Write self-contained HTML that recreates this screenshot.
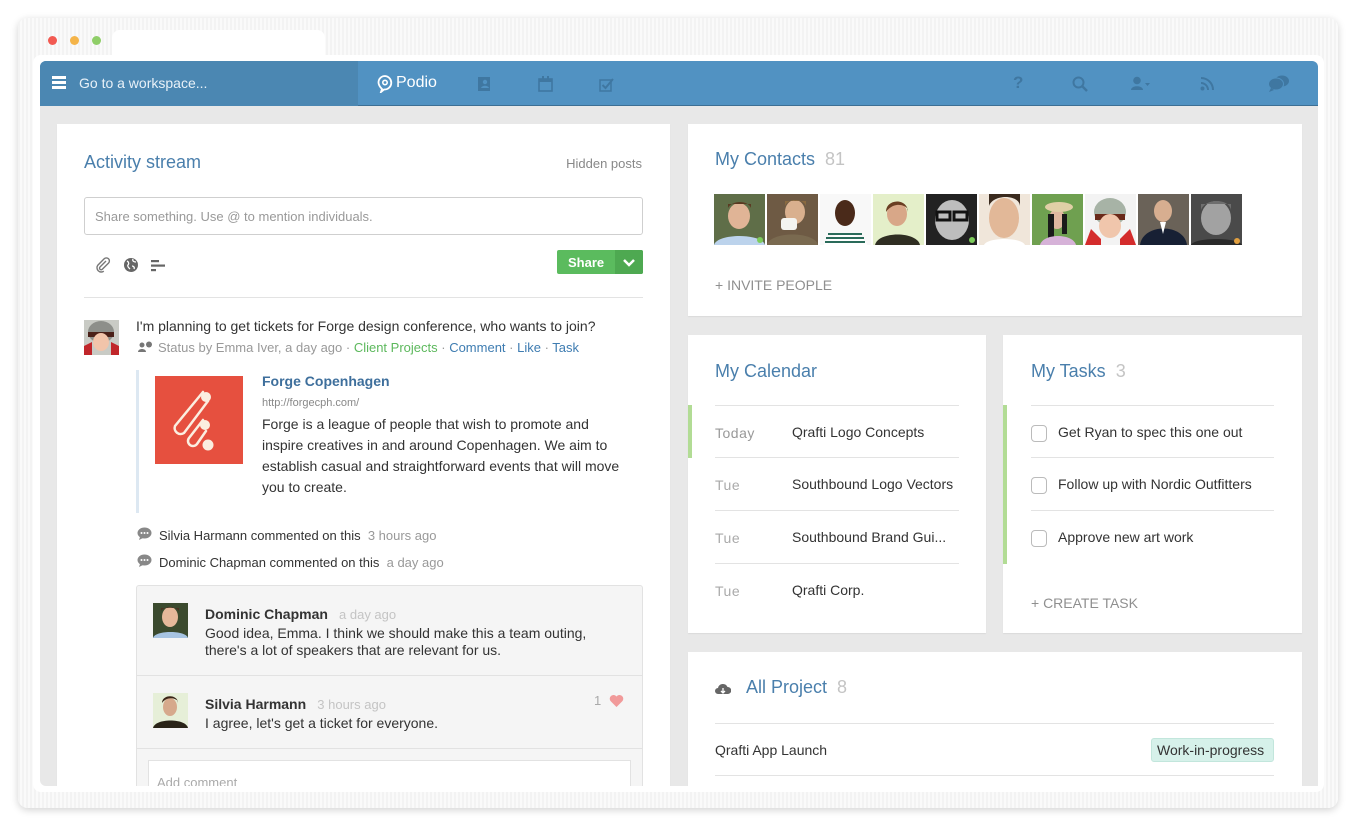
<!DOCTYPE html>
<html><head><meta charset="utf-8">
<style>
*{box-sizing:border-box;margin:0;padding:0}
body{width:1357px;height:827px;background:#fff;font-family:"Liberation Sans",Arial,sans-serif;position:relative;overflow:hidden;color:#333}
.abs{position:absolute}
.frame{left:18px;top:18px;width:1320px;height:790px;border-radius:10px;background:repeating-linear-gradient(90deg,#f3f3f3 0 2px,#fafafa 2px 4px);box-shadow:0 2px 8px rgba(0,0,0,.18)}
.inner{left:33px;top:55px;width:1291px;height:737px;background:#fff;border-radius:8px}
.tab{left:112px;top:30px;width:213px;height:30px;background:#fff;border-radius:8px 8px 0 0}
.dot{width:9px;height:9px;border-radius:50%;top:36px}
.app{left:40px;top:61px;width:1278px;height:725px;background:#e8e8e8;overflow:hidden;border-radius:6px 6px 0 6px}
.hdr{left:0;top:0;width:1278px;height:45px;background:#5192c2;border-bottom:1px solid #3d6f94}
.hdrl{left:0;top:0;width:318px;height:45px;background:#4b87b2}
.card{background:#fff;box-shadow:0 1px 1px rgba(0,0,0,.06)}
.h{font-size:18px;color:#4a7fac}
.n{color:#c4c4c4}
.sm{font-size:13px}
.line{height:1px;background:#e3e3e3}
.gray{color:#8a8a8a}
</style></head><body>
<div class="abs frame"></div>
<div class="abs tab"></div>
<div class="abs dot" style="left:48px;background:#f25a52"></div>
<div class="abs dot" style="left:70px;background:#f4b449"></div>
<div class="abs dot" style="left:92px;background:#8fce68"></div>
<div class="abs inner"></div>

<div class="abs app">
 <div class="abs hdr"></div>
 <div class="abs hdrl"></div>
 <div class="abs" style="left:12px;top:15px;width:14px;height:3px;background:#fff;box-shadow:0 5px 0 #fff,0 10px 0 #fff"></div>
 <div class="abs" style="left:39px;top:14px;font-size:14px;color:#e8f1f8">Go to a workspace...</div>
 <svg class="abs" style="left:337px;top:14px" width="16" height="18" viewBox="0 0 16 18"><path d="M8 1a6.5 6.5 0 0 0-6.5 6.5c0 3 2 5 3.5 6.5L4 17l3-2.5A6.5 6.5 0 1 0 8 1z" fill="none" stroke="#fff" stroke-width="1.8"/><circle cx="8" cy="7.5" r="2.2" fill="none" stroke="#fff" stroke-width="1.6"/></svg>
 <div class="abs" style="left:356px;top:13px;font-size:16px;color:#fff">Podio</div>
 <svg class="abs" style="left:437px;top:15px" width="14" height="16"><rect x="1" y="1" width="12" height="14" fill="#3f77a1"/><circle cx="8" cy="6" r="2.2" fill="#5192c2"/><path d="M4 12c1-3 7-3 8 0z" fill="#5192c2"/></svg>
 <svg class="abs" style="left:498px;top:15px" width="15" height="16"><rect x="1" y="3" width="13" height="12" fill="none" stroke="#3f77a1" stroke-width="1.6"/><rect x="1" y="3" width="13" height="3" fill="#3f77a1"/><rect x="4" y="0" width="2" height="4" fill="#3f77a1"/><rect x="9" y="0" width="2" height="4" fill="#3f77a1"/></svg>
 <svg class="abs" style="left:559px;top:16px" width="16" height="15"><rect x="1" y="3" width="11" height="11" fill="none" stroke="#3f77a1" stroke-width="1.5"/><path d="M3.5 8l3 3L14 2" fill="none" stroke="#3f77a1" stroke-width="2"/></svg>
 <div class="abs" style="left:973px;top:12px;font-size:17px;font-weight:bold;color:#3f77a1">?</div>
 <svg class="abs" style="left:1032px;top:15px" width="16" height="16"><circle cx="6.5" cy="6.5" r="5" fill="none" stroke="#3f77a1" stroke-width="2"/><path d="M10 10l5 5" stroke="#3f77a1" stroke-width="2.5"/></svg>
 <svg class="abs" style="left:1090px;top:15px" width="22" height="15"><circle cx="7" cy="4.5" r="3.8" fill="#3f77a1"/><path d="M1 14c0-5 12-5 12 0z" fill="#3f77a1"/><path d="M15 7h5l-2.5 3z" fill="#3f77a1"/></svg>
 <svg class="abs" style="left:1160px;top:15px" width="14" height="15"><circle cx="2.5" cy="12.5" r="2" fill="#3f77a1"/><path d="M1 7a7 7 0 0 1 7 7M1 2a12 12 0 0 1 12 12" fill="none" stroke="#3f77a1" stroke-width="2"/></svg>
 <svg class="abs" style="left:1228px;top:14px" width="22" height="17"><ellipse cx="14" cy="6" rx="7" ry="5.5" fill="#3f77a1"/><ellipse cx="8" cy="9" rx="7.5" ry="6" fill="#3f77a1" stroke="#5192c2" stroke-width="1"/><path d="M3 13l-2 4 5-2z" fill="#3f77a1"/></svg>

 <div class="abs card" style="left:17px;top:63px;width:613px;height:680px">
  <div class="abs h" style="left:27px;top:28px">Activity stream</div>
  <div class="abs sm gray" style="right:28px;top:32px;color:#888">Hidden posts</div>
  <div class="abs" style="left:27px;top:73px;width:559px;height:38px;border:1px solid #cfcfcf;border-radius:3px"></div>
  <div class="abs sm" style="left:38px;top:85px;color:#999">Share something. Use @ to mention individuals.</div>
  <svg class="abs" style="left:38px;top:133px" width="16" height="16"><path d="M11 4l-6 6a1.6 1.6 0 0 0 2.3 2.3l6.2-6.2a3 3 0 0 0-4.3-4.3L2.8 8.2a4.3 4.3 0 0 0 6 6" fill="none" stroke="#777" stroke-width="1.4"/></svg>
  <svg class="abs" style="left:66px;top:133px" width="16" height="16"><circle cx="8" cy="8" r="7" fill="#666"/><path d="M4 4c2 1 2 3 1 4s1 3 2 4M10 2c-1 2 1 3 3 3M9 9c1 0 3 1 2 3" fill="none" stroke="#fff" stroke-width="1.3"/></svg>
  <svg class="abs" style="left:94px;top:135px" width="16" height="14"><rect x="0" y="1" width="8" height="2.2" fill="#666"/><rect x="0" y="5.5" width="14" height="2.2" fill="#666"/><rect x="0" y="10" width="5" height="2.2" fill="#666"/></svg>
  <div class="abs" style="left:500px;top:126px;width:86px;height:24px;background:#5bbb5e;border-radius:2px"></div>
  <div class="abs" style="left:558px;top:126px;width:28px;height:24px;background:#4ea951;border-radius:0 2px 2px 0"></div>
  <div class="abs" style="left:511px;top:131px;font-size:13px;font-weight:bold;color:#fff">Share</div>
  <svg class="abs" style="left:565px;top:134px" width="14" height="10"><path d="M2 2l5 5 5-5" fill="none" stroke="#fff" stroke-width="2.5"/></svg>
  <div class="abs line" style="left:27px;top:173px;width:559px"></div>

  <svg class="abs" style="left:27px;top:196px" width="35" height="35"><rect width="35" height="35" fill="#c9cbc5"/><ellipse cx="17" cy="12" rx="13" ry="11" fill="#8d8f8a"/><rect x="4" y="12" width="26" height="5" fill="#4a2018"/><ellipse cx="17" cy="22" rx="8" ry="9" fill="#f2c4aa"/><path d="M0 26l8-4v13H0zM35 26l-8-4v13h8z" fill="#c0262a"/></svg>
  <div class="abs" style="left:79px;top:194px;font-size:14px;color:#333">I'm planning to get tickets for Forge design conference, who wants to join?</div>
  <svg class="abs" style="left:80px;top:217px" width="16" height="12"><circle cx="5" cy="4" r="2.5" fill="#777"/><path d="M1 11c0-4 8-4 8 0z" fill="#777"/><circle cx="12" cy="3.5" r="3" fill="#777"/></svg>
  <div class="abs sm" style="left:101px;top:216px;color:#999">Status by Emma Iver, a day ago · <span style="color:#5cb85c">Client Projects</span> · <span style="color:#3e7cb1">Comment</span> · <span style="color:#3e7cb1">Like</span> · <span style="color:#3e7cb1">Task</span></div>
  <div class="abs" style="left:79px;top:246px;width:3px;height:143px;background:#dde8f2"></div>
  <svg class="abs" style="left:98px;top:252px" width="88" height="88"><rect width="88" height="88" fill="#e6503f"/><g fill="none" stroke="#fbeee0" stroke-width="2.5" stroke-linecap="round"><path d="M48 16L20 50a6 6 0 0 0 9 7L53 25"/><path d="M48 44L34 62a5 5 0 0 0 8 6L51 55"/></g><circle cx="51" cy="21" r="5" fill="#fbeee0"/><circle cx="50" cy="49" r="5" fill="#fbeee0"/><circle cx="53" cy="69" r="5.5" fill="#fbeee0"/></svg>
  <div class="abs" style="left:205px;top:249px;font-size:14px;font-weight:bold;color:#3e6f9c">Forge Copenhagen</div>
  <div class="abs" style="left:205px;top:273px;font-size:11px;color:#888">http://forgecph.com/</div>
  <div class="abs" style="left:205px;top:290px;width:366px;font-size:14px;line-height:21px;color:#333">Forge is a league of people that wish to promote and inspire creatives in and around Copenhagen. We aim to establish casual and straightforward events that will move you to create.</div>
  <svg class="abs" style="left:80px;top:403px" width="15" height="13"><ellipse cx="7.5" cy="6" rx="7" ry="5.5" fill="#888"/><path d="M3 10l-1 3 4-2z" fill="#888"/><circle cx="4.5" cy="6" r="1" fill="#fff"/><circle cx="7.5" cy="6" r="1" fill="#fff"/><circle cx="10.5" cy="6" r="1" fill="#fff"/></svg>
  <div class="abs sm" style="left:102px;top:404px">Silvia Harmann commented on this <span style="color:#999">&nbsp;3 hours ago</span></div>
  <svg class="abs" style="left:80px;top:430px" width="15" height="13"><ellipse cx="7.5" cy="6" rx="7" ry="5.5" fill="#888"/><path d="M3 10l-1 3 4-2z" fill="#888"/><circle cx="4.5" cy="6" r="1" fill="#fff"/><circle cx="7.5" cy="6" r="1" fill="#fff"/><circle cx="10.5" cy="6" r="1" fill="#fff"/></svg>
  <div class="abs sm" style="left:102px;top:431px">Dominic Chapman commented on this <span style="color:#999">&nbsp;a day ago</span></div>
  <div class="abs" style="left:79px;top:461px;width:507px;height:240px;background:#f5f5f5;border:1px solid #e2e2e2;border-radius:3px"></div>
  <div class="abs line" style="left:80px;top:551px;width:505px;background:#e2e2e2"></div>
  <div class="abs line" style="left:80px;top:624px;width:505px;background:#e2e2e2"></div>
  <svg class="abs" style="left:96px;top:479px" width="35" height="35"><rect width="35" height="35" fill="#3b4a2e"/><ellipse cx="17" cy="14" rx="8" ry="10" fill="#e6b89a"/><path d="M8 8c3-5 15-5 18 0v-3H8z" fill="#4a3020"/><path d="M0 35c2-8 33-8 35 0z" fill="#a7c4e2"/></svg>
  <div class="abs" style="left:148px;top:482px;font-size:14px;font-weight:bold;color:#333">Dominic Chapman <span style="font-weight:normal;color:#c4c4c4;font-size:13px">&nbsp;&nbsp;a day ago</span></div>
  <div class="abs" style="left:148px;top:501px;font-size:14px;line-height:17px;color:#333">Good idea, Emma. I think we should make this a team outing,<br>there's a lot of speakers that are relevant for us.</div>
  <svg class="abs" style="left:96px;top:569px" width="35" height="35"><rect width="35" height="35" fill="#e6efd8"/><ellipse cx="17" cy="14" rx="7" ry="9" fill="#d6a98c"/><path d="M9 10c0-9 16-9 16 0v-2c-4-4-12-4-16 2z" fill="#3a2416"/><path d="M0 35c2-10 33-10 35 0z" fill="#2a2418"/></svg>
  <div class="abs" style="left:148px;top:572px;font-size:14px;font-weight:bold;color:#333">Silvia Harmann <span style="font-weight:normal;color:#c4c4c4;font-size:13px">&nbsp;&nbsp;3 hours ago</span></div>
  <div class="abs" style="left:148px;top:591px;font-size:14px;color:#333">I agree, let's get a ticket for everyone.</div>
  <div class="abs" style="left:537px;top:569px;font-size:13px;color:#aaa">1</div>
  <svg class="abs" style="left:552px;top:570px" width="15" height="13"><path d="M7.5 13L1.5 7A3.5 3.5 0 0 1 7.5 2.5 3.5 3.5 0 0 1 13.5 7z" fill="#f19a9a"/></svg>
  <div class="abs" style="left:91px;top:636px;width:483px;height:50px;background:#fff;border:1px solid #e2e2e2"></div>
  <div class="abs sm" style="left:100px;top:651px;color:#aaa">Add comment</div>
 </div>

 <div class="abs card" style="left:648px;top:63px;width:614px;height:192px">
  <div class="abs h" style="left:27px;top:25px">My Contacts <span class="n">&nbsp;81</span></div>
  <div class="abs" style="left:27px;top:153px;font-size:14px;color:#8f8f8f">+ INVITE PEOPLE</div>
 </div>
 <div class="abs" style="left:674px;top:133px;height:51px;display:flex;gap:2px">
  <svg width="51" height="51"><rect width="51" height="51" fill="#5f6e48"/><ellipse cx="25" cy="22" rx="11" ry="13" fill="#e0b496"/><path d="M14 14c4-8 20-8 23 0v-4H14z" fill="#5b3a22"/><path d="M0 51c3-12 48-12 51 0z" fill="#bcd3ec"/><circle cx="46" cy="46" r="3" fill="#7ccc5a"/></svg>
  <svg width="51" height="51"><rect width="51" height="51" fill="#6e5a44"/><ellipse cx="28" cy="18" rx="10" ry="12" fill="#d9b08e"/><path d="M18 12c3-8 18-8 21 0v-5H18z" fill="#8a6a40"/><path d="M0 51c3-14 48-14 51 0z" fill="#7a6a50"/><rect x="14" y="24" width="16" height="12" rx="3" fill="#f4f4f0"/></svg>
  <svg width="51" height="51"><rect width="51" height="51" fill="#f8f8f8"/><ellipse cx="25" cy="19" rx="10" ry="13" fill="#4a2a1a"/><path d="M4 51c3-14 40-14 43 0z" fill="#fff"/><path d="M6 44h38M5 48h40M8 40h34" stroke="#2a6b5a" stroke-width="2"/></svg>
  <svg width="51" height="51"><rect width="51" height="51" fill="#e4efc9"/><ellipse cx="24" cy="20" rx="10" ry="12" fill="#d8a788"/><path d="M13 18c0-14 22-14 22 0v-3c-5-6-16-6-22 3z" fill="#6a3e22"/><path d="M2 51c3-14 42-14 45 0z" fill="#2f2e22"/></svg>
  <svg width="51" height="51"><rect width="51" height="51" fill="#222"/><ellipse cx="26" cy="26" rx="17" ry="20" fill="#bdbdbd"/><rect x="11" y="18" width="13" height="8" fill="none" stroke="#111" stroke-width="3"/><rect x="28" y="18" width="13" height="8" fill="none" stroke="#111" stroke-width="3"/><circle cx="46" cy="46" r="3" fill="#7ccc5a"/></svg>
  <svg width="51" height="51"><rect width="51" height="51" fill="#f0e6da"/><ellipse cx="25" cy="24" rx="15" ry="20" fill="#e2b898"/><path d="M10 12c4-12 30-12 31 0v-12H10z" fill="#3a2a1e"/><path d="M5 51c3-8 38-8 41 0z" fill="#fff"/></svg>
  <svg width="51" height="51"><rect width="51" height="51" fill="#6fa050"/><ellipse cx="25" cy="25" rx="8" ry="10" fill="#e0b8a0"/><ellipse cx="27" cy="13" rx="14" ry="5" fill="#e0cfa6"/><path d="M16 20v25h6V20zM30 20v20h5V20z" fill="#1a1a1a"/><path d="M8 51c3-12 33-12 36 0z" fill="#d6b2d8"/></svg>
  <svg width="51" height="51"><rect width="51" height="51" fill="#f3f3f3"/><ellipse cx="25" cy="18" rx="16" ry="14" fill="#a7b3a6"/><rect x="10" y="20" width="30" height="6" fill="#6a2a1a"/><ellipse cx="25" cy="32" rx="11" ry="12" fill="#f0c6ac"/><path d="M0 51l6-16 10 10v6zM51 51l-6-16-10 10v6z" fill="#d42c2c"/></svg>
  <svg width="51" height="51"><rect width="51" height="51" fill="#6a6258"/><ellipse cx="25" cy="17" rx="9" ry="11" fill="#d7ae90"/><path d="M2 51c3-22 44-22 47 0z" fill="#172034"/><path d="M22 28l3 12 3-12z" fill="#fff"/></svg>
  <svg width="51" height="51"><rect width="51" height="51" fill="#4a4a4a"/><ellipse cx="25" cy="24" rx="15" ry="17" fill="#a2a2a2"/><path d="M10 16c4-12 28-12 30 0v-6H10z" fill="#6e6e6e"/><path d="M0 51c3-8 48-8 51 0z" fill="#2a2a2a"/><circle cx="46" cy="47" r="3" fill="#e2a040"/></svg>
 </div>

 <div class="abs card" style="left:648px;top:274px;width:298px;height:298px">
  <div class="abs h" style="left:27px;top:26px">My Calendar</div>
  <div class="abs line" style="left:27px;top:70px;width:244px"></div>
  <div class="abs line" style="left:27px;top:122px;width:244px"></div>
  <div class="abs line" style="left:27px;top:175px;width:244px"></div>
  <div class="abs line" style="left:27px;top:228px;width:244px"></div>
  <div class="abs" style="left:0;top:70px;width:4px;height:53px;background:#b2dc95"></div>
  <div class="abs" style="left:27px;top:90px;font-size:14px;color:#999;letter-spacing:.5px">Today</div>
  <div class="abs" style="left:104px;top:89px;font-size:14px">Qrafti Logo Concepts</div>
  <div class="abs" style="left:27px;top:142px;font-size:14px;color:#aaa;letter-spacing:.5px">Tue</div>
  <div class="abs" style="left:104px;top:141px;font-size:14px">Southbound Logo Vectors</div>
  <div class="abs" style="left:27px;top:195px;font-size:14px;color:#aaa;letter-spacing:.5px">Tue</div>
  <div class="abs" style="left:104px;top:194px;font-size:14px">Southbound Brand Gui...</div>
  <div class="abs" style="left:27px;top:248px;font-size:14px;color:#aaa;letter-spacing:.5px">Tue</div>
  <div class="abs" style="left:104px;top:247px;font-size:14px">Qrafti Corp.</div>
 </div>

 <div class="abs card" style="left:963px;top:274px;width:299px;height:298px">
  <div class="abs h" style="left:28px;top:26px">My Tasks <span class="n">&nbsp;3</span></div>
  <div class="abs line" style="left:28px;top:70px;width:243px"></div>
  <div class="abs line" style="left:28px;top:122px;width:243px"></div>
  <div class="abs line" style="left:28px;top:175px;width:243px"></div>
  <div class="abs" style="left:0;top:70px;width:4px;height:159px;background:#b2dc95"></div>
  <div class="abs" style="left:28px;top:90px;width:16px;height:17px;border:1px solid #bbb;border-radius:4px"></div>
  <div class="abs" style="left:55px;top:89px;font-size:14px">Get Ryan to spec this one out</div>
  <div class="abs" style="left:28px;top:142px;width:16px;height:17px;border:1px solid #bbb;border-radius:4px"></div>
  <div class="abs" style="left:55px;top:141px;font-size:14px">Follow up with Nordic Outfitters</div>
  <div class="abs" style="left:28px;top:195px;width:16px;height:17px;border:1px solid #bbb;border-radius:4px"></div>
  <div class="abs" style="left:55px;top:194px;font-size:14px">Approve new art work</div>
  <div class="abs" style="left:28px;top:260px;font-size:14px;color:#8f8f8f">+ CREATE TASK</div>
 </div>

 <div class="abs card" style="left:648px;top:591px;width:614px;height:150px">
  <svg class="abs" style="left:27px;top:31px" width="16" height="12"><path d="M3 11a3 3 0 0 1 0-6 5 5 0 0 1 9.5-1A3.5 3.5 0 0 1 13 11z" fill="#666"/><path d="M8 5v5M6 8l2 2 2-2" stroke="#fff" stroke-width="1.3" fill="none"/></svg>
  <div class="abs h" style="left:58px;top:25px">All Project <span class="n">&nbsp;8</span></div>
  <div class="abs line" style="left:27px;top:71px;width:559px"></div>
  <div class="abs" style="left:27px;top:90px;font-size:14px">Qrafti App Launch</div>
  <div class="abs" style="left:463px;top:86px;width:123px;height:24px;background:#d6f1ea;border:1px solid #c2e6dc;border-radius:3px"></div>
  <div class="abs" style="left:469px;top:90px;font-size:14px">Work-in-progress</div>
  <div class="abs line" style="left:27px;top:123px;width:559px"></div>
 </div>
</div>
</body></html>
